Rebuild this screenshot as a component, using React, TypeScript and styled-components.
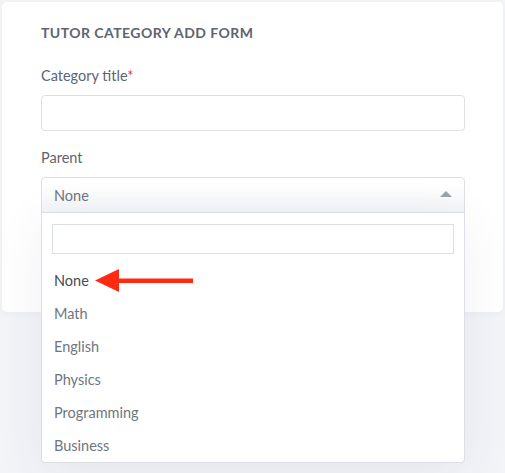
import styled, { createGlobalStyle } from "styled-components";

const GlobalStyle = createGlobalStyle`
  body {
    margin: 0;
    background: #f3f4f8;
    font-family: "Lato", "Noto Sans", sans-serif;
  }
`;

const colors = {
  heading: "#5d6470",
  label: "#5d6470",
  text: "#6f7680",
  strong: "#454b54",
  border: "#dcdfe5",
  red: "#ff2a12",
};

const Page = styled.div`
  padding: 2px 2px 0 2px;
  min-height: 473px;
  box-sizing: border-box;
`;

const Card = styled.section`
  background: #ffffff;
  border-radius: 5px;
  padding: 22px 38px 22px 39px;
  box-shadow: 0 2px 6px rgba(60, 70, 110, 0.04);
`;

const Title = styled.h2`
  margin: 0 0 26px;
  font-size: 14px;
  line-height: 18px;
  font-weight: 700;
  letter-spacing: 0.45px;
  color: ${colors.heading};
  text-transform: uppercase;
`;

const Field = styled.div`
  margin-bottom: 19px;
`;

const Label = styled.label`
  display: block;
  font-size: 14.5px;
  color: ${colors.label};
  margin-bottom: 11px;
  line-height: 16px;
`;

const Required = styled.span`
  color: ${colors.red};
`;

const TextInput = styled.input`
  display: block;
  width: 100%;
  box-sizing: border-box;
  height: 36px;
  border: 1px solid ${colors.border};
  border-radius: 4px;
  outline: none;
  background: #fff;
`;

const SelectWrap = styled.div`
  position: relative;
`;

const SelectBox = styled.div`
  height: 36px;
  box-sizing: border-box;
  border: 1px solid ${colors.border};
  border-radius: 4px 4px 0 0;
  background: linear-gradient(#ffffff 20%, #f3f4f7);
  display: flex;
  align-items: center;
  justify-content: space-between;
  padding: 0 12px 0 12px;
  font-size: 14.5px;
  color: ${colors.text};
`;

const Caret = styled.span`
  width: 0;
  height: 0;
  border-left: 6px solid transparent;
  border-right: 6px solid transparent;
  border-bottom: 6px solid #9aa3ab;
  margin-bottom: 2px;
`;

const Dropdown = styled.div`
  position: absolute;
  top: 100%;
  left: 0;
  right: 0;
  z-index: 10;
  background: #fff;
  border: 1px solid ${colors.border};
  border-top: none;
  border-radius: 0 0 4px 4px;
  padding: 11px 10px 0 10px;
  box-shadow: 0 10px 50px rgba(60, 70, 120, 0.08);
`;

const Search = styled.input`
  display: block;
  width: 100%;
  box-sizing: border-box;
  height: 30px;
  border: 1px solid ${colors.border};
  outline: none;
  margin-bottom: 10px;
`;

const Options = styled.ul`
  list-style: none;
  margin: 0;
  padding: 0;
`;

const Option = styled.li<{ $active?: boolean }>`
  position: relative;
  height: 33px;
  display: flex;
  align-items: center;
  padding-left: 2px;
  font-size: 14.5px;
  color: ${({ $active }) => ($active ? colors.strong : colors.text)};
`;

const Pointer = styled.svg`
  position: absolute;
  left: 43px;
  top: 4px;
`;

const SubmitButton = styled.button`
  display: block;
  margin-top: 39px;
  height: 38px;
  width: 120px;
  border: none;
  border-radius: 4px;
  background: #e7e9fb;
`;

const options = ["None", "Math", "English", "Physics", "Programming", "Business"];

export default function App() {
  return (
    <>
      <GlobalStyle />
      <Page>
        <Card>
          <Title>Tutor Category Add Form</Title>
          <Field>
            <Label>
              Category title<Required>*</Required>
            </Label>
            <TextInput />
          </Field>
          <Field>
            <Label>Parent</Label>
            <SelectWrap>
              <SelectBox>
                None
                <Caret />
              </SelectBox>
              <Dropdown>
                <Search />
                <Options>
                  {options.map((o, i) => (
                    <Option key={o} $active={i === 0}>
                      {o}
                      {i === 0 && (
                        <Pointer width="100" height="26" viewBox="0 0 100 26">
                          <rect x="20" y="10.5" width="78" height="4.5" fill={colors.red} />
                          <polygon points="0,12.5 24,1 24,24" fill={colors.red} />
                        </Pointer>
                      )}
                    </Option>
                  ))}
                </Options>
              </Dropdown>
            </SelectWrap>
          </Field>
          <SubmitButton />
        </Card>
      </Page>
    </>
  );
}
